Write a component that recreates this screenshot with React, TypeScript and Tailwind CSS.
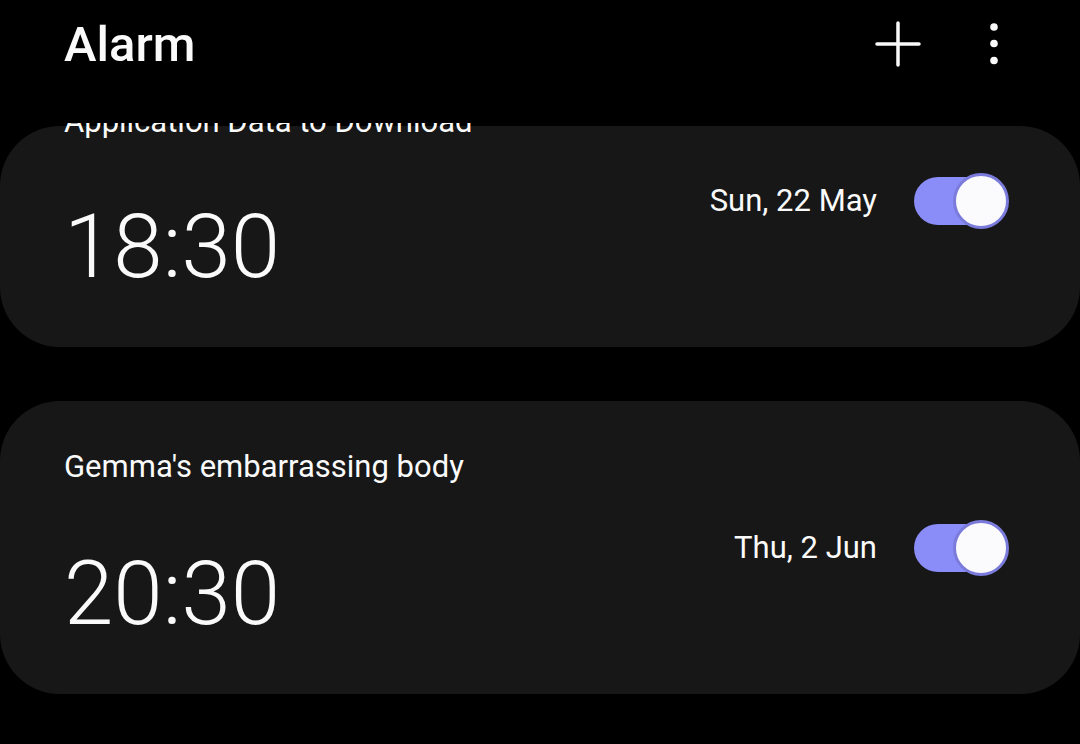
import type { ReactNode } from "react";

// ── Data ──────────────────────────────────────────────────────────────────────

interface AlarmItem {
  id: string;
  label: string;
  date: string;
  time: string;
  on: boolean;
}

const ALARMS: AlarmItem[] = [
  { id: "a1", label: "Application Data to Download", date: "Sun, 22 May", time: "18:30", on: true },
  { id: "a2", label: "Gemma's embarrassing body", date: "Thu, 2 Jun", time: "20:30", on: true },
];

const FONT = { fontFamily: "Roboto, 'Noto Sans', sans-serif" };
const LIGHT = { fontFamily: "'Roboto Light', Roboto, 'Noto Sans', sans-serif" };

// ── Bits ──────────────────────────────────────────────────────────────────────

function Toggle({ on }: { on: boolean }) {
  return (
    <div className="relative w-[95px] h-[56px] shrink-0">
      <div className={`absolute left-0 top-[4px] h-[48px] w-[88px] rounded-full ${on ? "bg-[#8a8cf8]" : "bg-[#3a3a3a]"}`} />
      <div className="absolute right-0 top-0 w-[56px] h-[56px] rounded-full bg-[#fbfbfd] border-[3px] border-[#7b7bdc]" />
    </div>
  );
}

function AlarmCard({ alarm, titleClass, rowClass, children }: { alarm: AlarmItem; titleClass: string; rowClass: string; children?: ReactNode }) {
  return (
    <div className="bg-[#171717] rounded-[60px] pl-16 pr-[71px] pb-[57px]">
      <div className={`text-[31px] leading-[36px] text-[#fafafa] ${titleClass}`}>{alarm.label}</div>
      <div className={`flex items-start justify-between ${rowClass}`}>
        <div className="mt-[31px] text-[89px] leading-[86px] font-light text-[#fafafa]" style={LIGHT}>{alarm.time}</div>
        <div className="flex items-center gap-[37px] h-[56px]">
          <span className="text-[31px] text-[#fafafa] -ml-[4px]">{alarm.date}</span>
          <Toggle on={alarm.on} />
        </div>
      </div>
      {children}
    </div>
  );
}

// ── Screen ────────────────────────────────────────────────────────────────────

export default function App() {
  return (
    <div className="w-[1080px] h-[744px] bg-black overflow-hidden flex flex-col" style={FONT}>
      <header className="h-[88px] shrink-0 flex items-center justify-between pl-16 pr-[82px]">
        <h1 className="text-[49px] leading-none font-medium text-[#fafafa]">Alarm</h1>
        <div className="flex items-center gap-[68px]">
          <svg width="48" height="48" viewBox="0 0 48 48" className="text-[#fafafa]">
            <path d="M24 3v42M3 24h42" stroke="currentColor" strokeWidth="3.5" strokeLinecap="round" fill="none" />
          </svg>
          <svg width="8" height="42" viewBox="0 0 8 42" className="text-[#fafafa]">
            <circle cx="4" cy="4" r="3.8" fill="currentColor" />
            <circle cx="4" cy="20.5" r="3.8" fill="currentColor" />
            <circle cx="4" cy="37.5" r="3.8" fill="currentColor" />
          </svg>
        </div>
      </header>

      <main className="mt-[35px] flex-1 overflow-hidden">
        <div className="flex flex-col gap-[54px] pt-[3px]">
          <AlarmCard alarm={ALARMS[0]} titleClass="-mt-[22px]" rowClass="mt-[33px]" />
          <AlarmCard alarm={ALARMS[1]} titleClass="pt-[48px]" rowClass="mt-[35px]" />
        </div>
      </main>
    </div>
  );
}
